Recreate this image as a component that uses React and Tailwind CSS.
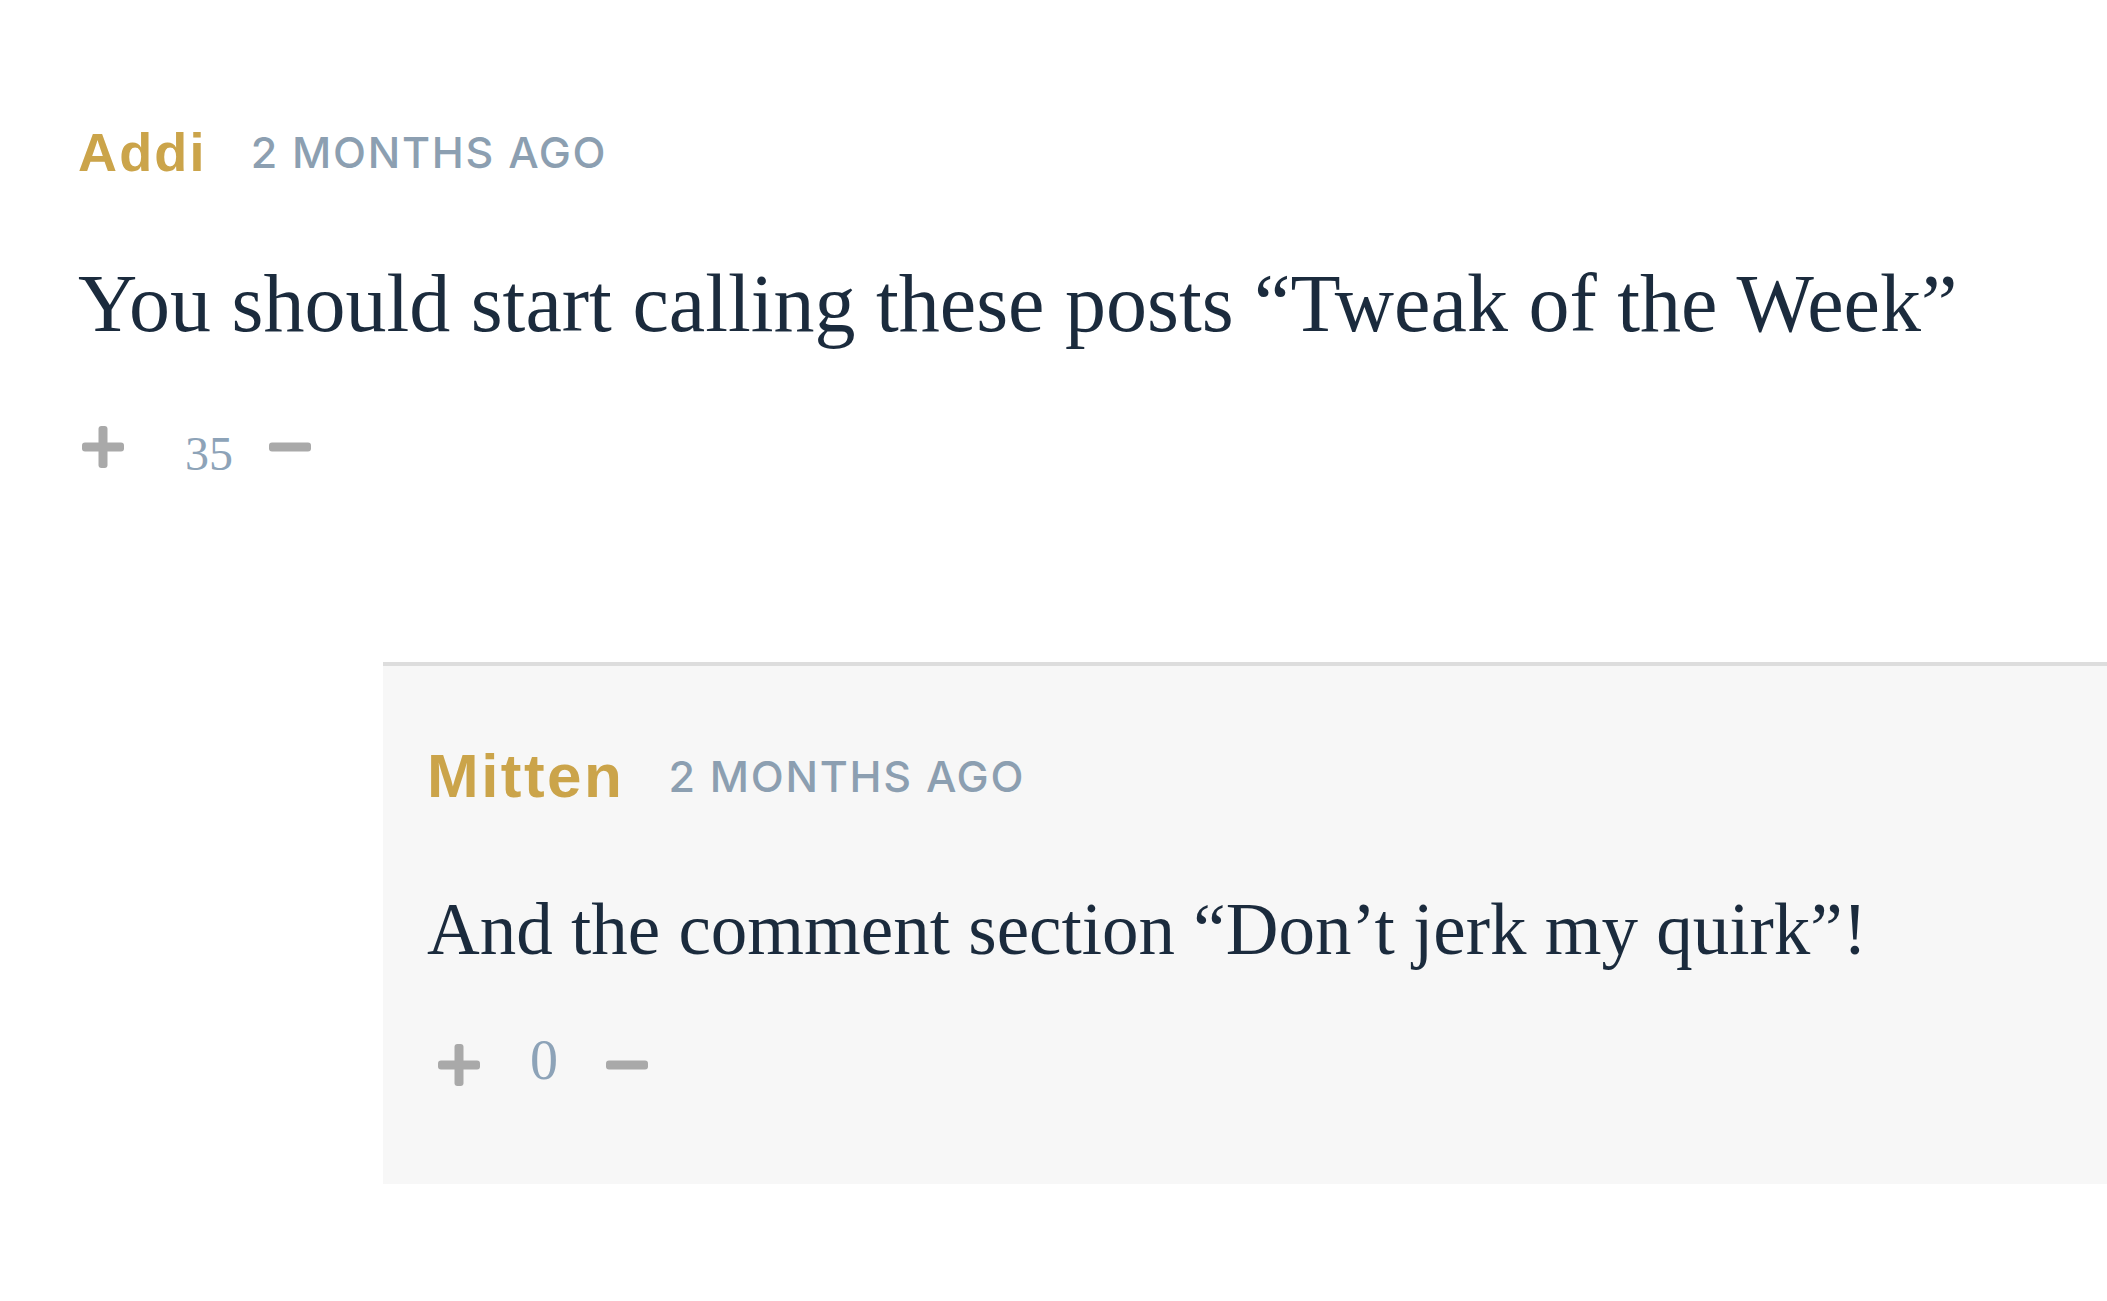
import React from 'react';

const Plus = ({ className = '' }) => (
  <svg width="42" height="42" viewBox="0 0 42 42" className={className}>
    <rect x="0" y="16.5" width="42" height="9" rx="3" fill="#a9a9a9" />
    <rect x="16.5" y="0" width="9" height="42" rx="3" fill="#a9a9a9" />
  </svg>
);

const Minus = ({ className = '' }) => (
  <svg width="42" height="42" viewBox="0 0 42 42" className={className}>
    <rect x="0" y="16.5" width="42" height="9" rx="3" fill="#a9a9a9" />
  </svg>
);

const Header = ({ name, time, nameSize }) => (
  <div className="flex items-center">
    <span className={`${nameSize} leading-none font-bold tracking-[0.04em] text-[#cba44a] font-['Liberation_Sans',Arial,sans-serif]`}>
      {name}
    </span>
    <span className="ml-[44px] text-[43px] leading-none font-medium tracking-[0.04em] text-[#8c9fb1] font-['Inter','Liberation_Sans',sans-serif]">
      {time}
    </span>
  </div>
);

export default function App() {
  return (
    <div className="min-h-screen bg-white overflow-hidden">
      {/* Comment */}
      <div className="pl-[78px] pt-[125px]">
        <Header name="Addi" time="2 MONTHS AGO" nameSize="text-[54px]" />
        <p className="mt-[76px] text-[82px] leading-[98px] text-[#1b2b3d] whitespace-nowrap font-['Liberation_Serif','Times_New_Roman',serif]">
          You should start calling these posts “Tweak of the Week”
        </p>
        <div className="mt-[73px] flex items-center h-[42px]">
          <Plus className="ml-[4px]" />
          <span className="ml-[61px] mt-[14px] w-[48px] text-[48px] leading-none text-[#8da3b8] font-['Liberation_Serif',serif]">
            35
          </span>
          <Minus className="ml-[36px]" />
        </div>
      </div>

      {/* Reply */}
      <div className="ml-[383px] mt-[194px] border-t-4 border-[#dddddd] bg-[#f7f7f7] pl-[44px] pt-[79px] pb-[98px]">
        <Header name="Mitten" time="2 MONTHS AGO" nameSize="text-[62px]" />
        <p className="mt-[79px] text-[73px] leading-[88px] text-[#1b2b3d] whitespace-nowrap font-['Liberation_Serif','Times_New_Roman',serif]">
          And the comment section “Don’t jerk my quirk”!
        </p>
        <div className="mt-[70px] flex items-center h-[42px]">
          <Plus className="ml-[11px]" />
          <span className="ml-[50px] mb-[11px] w-[28px] text-[56px] leading-none text-[#8da3b8] font-['Liberation_Serif',serif]">
            0
          </span>
          <Minus className="ml-[48px]" />
        </div>
      </div>
    </div>
  );
}
